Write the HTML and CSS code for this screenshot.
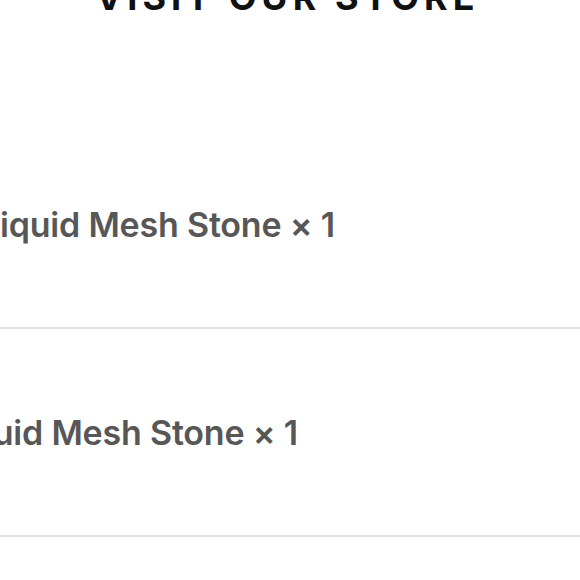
FILE: index.html
```html
<!DOCTYPE html>
<html lang="en">
<head>
<meta charset="UTF-8">
<meta name="viewport" content="width=device-width, initial-scale=1.0">
<title>Visit our store</title>
<link rel="stylesheet" href="styles.css">
</head>
<body>
    <div class="page">
        <h1 class="store-title">VISIT OUR STORE</h1>
        <div class="order-list">
            <div class="order-row">
                <span class="order-item first">Liquid Mesh Stone × 1</span>
            </div>
            <div class="order-row">
                <span class="order-item second">Liquid Mesh Stone × 1</span>
            </div>
        </div>
    </div>
</body>
</html>
```

FILE: styles.css
```css
body {
  margin: 0;
  background-color: #ffffff;
  font-family: Inter, "Noto Sans", sans-serif;
  overflow: hidden;
}
.page {
  width: 580px;
  height: 580px;
  overflow: hidden;
}
.store-title {
  margin: -28px 0 0 0;
  font-size: 36px;
  line-height: 50px;
  font-weight: 700;
  letter-spacing: 5px;
  color: #111111;
  text-align: center;
  padding-right: 5px;
}
.order-list {
  margin-top: 99px;
  display: flex;
  flex-direction: column;
}
.order-row {
  height: 206px;
  border-bottom: 2px solid #e4e4e4;
  display: flex;
  align-items: center;
  white-space: nowrap;
}
.order-item {
  font-size: 34px;
  font-weight: 600;
  letter-spacing: -0.2px;
  color: #575757;
  padding-top: 1px;
}
.order-item.first {
  margin-left: -19px;
}
.order-item.second {
  margin-left: -56px;
}
```
